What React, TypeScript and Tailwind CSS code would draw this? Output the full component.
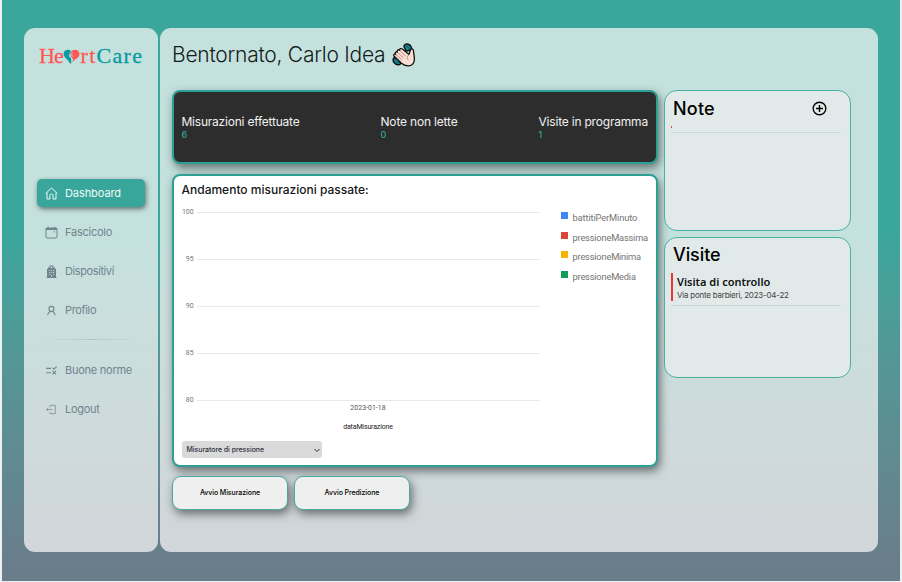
import type { ReactNode } from 'react';
import { MdRule } from 'react-icons/md';

const navIcon = 'h-[13px] w-[13px] shrink-0';

function HomeIcon() {
  return (
    <svg className={navIcon} viewBox="0 0 13 13" fill="none" stroke="currentColor" strokeWidth="1" strokeLinejoin="round">
      <path d="M.8 6.400 6.500 1 12.200 6.400M2 5.600V12h2.900V8.200c0-.7.5-1.100 1.600-1.100s1.600.4 1.600 1.100V12H11V5.600" />
    </svg>
  );
}

function CalendarIcon() {
  return (
    <svg className={navIcon} viewBox="0 0 13 13" fill="none" stroke="currentColor">
      <rect x="1" y="2" width="11" height="10" rx="1" />
      <path d="M1 3h11" strokeWidth="2" />
      <path d="M3.2.7v1.5M9.8.7v1.5" />
      <path d="M8.7 5.8h1.2" strokeWidth="1.2" />
    </svg>
  );
}

function BuildingIcon() {
  return (
    <svg className={navIcon} viewBox="0 0 13 13">
      <path fill="currentColor" d="M4.5 0.5h4v2H10v1.300h1V12h.5v1H1.500v-1H2V3.800h1V2.500h1.5z" />
      <path stroke="#c7e0dd" strokeWidth=".8" d="M6.5 1.300v2M5.500 2.300h2M4 5.500h1.2M6 5.500h1.2M8 5.500h1.2M4 7.500h1.2M6 7.500h1.2M8 7.500h1.2M4 9.500h1.2M8 9.500h1.2M6.5 10V12" />
    </svg>
  );
}

function PersonIcon() {
  return (
    <svg className={navIcon} viewBox="0 0 13 13" fill="none" stroke="currentColor" strokeWidth="1.1">
      <circle cx="6.400" cy="4.900" r="2.500" />
      <path d="M2.700 11.300C3 9 4.200 7.500 6.400 7.500s3.400 1.500 3.700 3.800" />
    </svg>
  );
}

function LogoutIcon() {
  return (
    <svg className={navIcon} viewBox="0 0 13 13" fill="none" stroke="currentColor" strokeWidth=".7">
      <path d="M5 4V2.300h5.300v8.400H5V9M1.500 6.500h6M3.300 4.900 1.600 6.500l1.700 1.600" />
    </svg>
  );
}

function ClapIcon() {
  return (
    <svg className="h-6 w-6" viewBox="0 0 24 24" stroke="#111" strokeLinejoin="round" strokeLinecap="round">
      <path fill="#168da1" strokeWidth="1.500" d="M12 3.500C12 1 15 .3 17 1.500c2 1.100 3.200 3.500 2 5.500L14 8zM2.500 14.500c-2 1-1.700 4 .2 5.800 1.600 1.600 4.300 2.200 6 .4L7 16z" />
      <path fill="none" stroke="#0b3c48" strokeWidth=".8" d="M14 3.300c1.700 0 3 1.500 3.500 3M3 16.300c.3 1.900 2 3.200 3.800 3.200" />
      <path fill="#fbded1" strokeWidth="1.300" d="M9.500 20.300 2.200 13.200c-1.300-1.500.2-2.800 1.500-1.900C2.500 9.700 4 8.200 5.300 9.300 4.500 7.400 6.300 6.100 7.600 7.300 7.500 5.700 9.200 5 10.400 6.100l6.600 5.300 1.300-4.200c.6-1.900 3.100-1.600 3.100.4l1 7.500c.4 4.500-1.900 7.600-5.600 7.800-3 .2-5.200-.7-7.300-2.600z" />
      <path fill="none" stroke="#a97e70" strokeWidth=".8" d="m4 11.500 5.500 5M5.800 9.700l5.500 5M8 7.800l5.500 5M17 11.700c-2.200 1.500-2.300 3.800-.8 5.300" />
    </svg>
  );
}

function Logo() {
  return (
    <div className="flex h-6 items-center font-['Liberation_Serif',serif] text-[22px] leading-6">
      <span className="w-[23.500px] tracking-[-0.8px] text-[#ff5757] [-webkit-text-stroke:0.3px_#ff5757]">He</span>
      <svg className="h-[15px] w-[17px] shrink-0" viewBox="0 0 17 15">
        <path fill="#099ba1" d="M8 2C5.500-.5.500 1 .500 5c0 3.500 4.500 5 6.500 9.500l2-.5L8 9 6 7l2-2z" />
        <path fill="#ff5757" d="M8 3C10-.8 16.500.3 16.500 5c0 4-5 5-7.500 8.500L10 10 7.500 7z" />
        <path fill="none" stroke="#c7e1dd" strokeWidth=".7" d="M7.500 2.500 6.300 7 9 9.300 8.500 14M9.500 3.500 8 6l2.500 1.500" />
      </svg>
      <span className="w-[17px] pl-px tracking-[1.400px] text-[#ff5757] [-webkit-text-stroke:0.3px_#ff5757]">rt</span>
      <span className="tracking-[1.300px] text-[#099ba1] [-webkit-text-stroke:0.3px_#099ba1]">Care</span>
    </div>
  );
}

function NavItem({ icon, label, active = false, tracking }: { icon: ReactNode; label: string; active?: boolean; tracking: string }) {
  return (
    <a
      className={
        'flex h-7 items-center rounded-[5px] pl-[7.500px] text-[11px] ' +
        (active ? 'bg-[#38a69a] text-[#effaf8] shadow-[1px_2px_5px_rgba(0,0,0,0.5)]' : 'text-[#71848e]')
      }
    >
      {icon}
      <span className={'ml-[7.500px] whitespace-nowrap ' + tracking}>{label}</span>
    </a>
  );
}

function Stat({ label, value, className }: { label: string; value: number; className: string }) {
  return (
    <div className={'shrink-0 whitespace-nowrap ' + className}>
      <div className="text-[12px] leading-[15px] text-[#f1f1f1]">{label}</div>
      <div className="text-[9px] leading-[11px] font-medium tracking-normal text-[#2ea497]">{value}</div>
    </div>
  );
}

const ticks = [100, 95, 90, 85, 80];

const series = [
  { name: 'battitiPerMinuto', color: 'bg-[#4285f4]', tracking: 'tracking-[-0.12px]' },
  { name: 'pressioneMassima', color: 'bg-[#db4437]', tracking: 'tracking-[-0.2px]' },
  { name: 'pressioneMinima', color: 'bg-[#f4b400]', tracking: 'tracking-[-0.2px]' },
  { name: 'pressioneMedia', color: 'bg-[#0f9d58]', tracking: 'tracking-[-0.2px]' },
];

function Chart() {
  return (
    <div className="mt-[8px] flex h-[232px] font-['Roboto',sans-serif]">
      <div className="w-[358px]">
        {ticks.map((t) => (
          <div key={t} className="flex h-[47px] items-start">
            <span className="w-[12px] text-right text-[7px] leading-[14px] tracking-[-0.1px] text-[#777]">{t}</span>
            <div className="mt-[7px] ml-[3px] h-px flex-1 bg-[#e9e9e9]" />
          </div>
        ))}
        <div className="-mt-[36px] pl-[15px] text-center text-[7px] leading-[9px] text-[#555]">
          <div>2023-01-18</div>
          <div className="mt-[10px] tracking-[-0.15px] text-[#222]">dataMisurazione</div>
        </div>
      </div>
      <div className="ml-[21px] pt-[2px]">
        {series.map((s) => (
          <div key={s.name} className="flex h-[19.700px] items-start">
            <div className={'mt-[5px] h-[7px] w-[7px] ' + s.color} />
            <span className={'ml-[5px] text-[9.300px] leading-[21px] text-[#757575] ' + s.tracking}>{s.name}</span>
          </div>
        ))}
      </div>
    </div>
  );
}

const cardShadow = 'shadow-[2px_4px_10px_rgba(0,0,0,0.5)]';

function SideCard({ children }: { children: ReactNode }) {
  return (
    <section className="h-[141px] w-[187px] rounded-[13px] border-[1.5px] border-[#4bb1a5] bg-[#e1eae8] pr-[9px] pl-[6px]">
      {children}
    </section>
  );
}

export default function App() {
  return (
    <div className="h-[582px] w-[902px] overflow-hidden bg-[#edf1f3] px-[2px] pb-[1px] font-['Inter',sans-serif]">
      <div className="flex h-[581px] w-[898px] gap-[2px] bg-linear-to-b from-[#3aa69c] from-40% to-[#6a7d8b] to-98% pt-7 pl-[22px]">
        <aside className="h-[524px] w-[134px] rounded-[11px] bg-[#faf8f8]/72 px-[13px] pt-4">
          <div className="pl-[2px]"><Logo /></div>
          <nav className="mt-[111px] w-[108px]">
            <NavItem active icon={<HomeIcon />} label="Dashboard" tracking="tracking-[-0.08px]" />
            <div className="mt-[11px]"><NavItem icon={<CalendarIcon />} label="Fascicolo" tracking="tracking-[-0.25px]" /></div>
            <div className="mt-[11px]"><NavItem icon={<BuildingIcon />} label="Dispositivi" tracking="tracking-[-0.4px]" /></div>
            <div className="mt-[11px]"><NavItem icon={<PersonIcon />} label="Profilo" tracking="tracking-[-0.35px]" /></div>
            <div className="mt-[15px] ml-[6px] h-px w-[96px] bg-linear-to-r from-transparent via-[#b2c6c6] to-transparent" />
            <div className="mt-4"><NavItem icon={<MdRule className={navIcon} />} label="Buone norme" tracking="tracking-[-0.25px]" /></div>
            <div className="mt-[11px]"><NavItem icon={<LogoutIcon />} label="Logout" tracking="tracking-[-0.3px]" /></div>
          </nav>
        </aside>
        <main className="h-[524px] w-[718px] rounded-[11px] bg-[#faf8f8]/72 pt-[13px] pl-[12px]">
          <header className="flex h-7 items-center">
            <h1 className="w-[220px] text-[21px] font-light tracking-[-0.24px] whitespace-nowrap text-[#121c1b]">Bentornato, Carlo Idea</h1>
            <ClapIcon />
          </header>
          <div className="mt-[21px] flex gap-[6px]">
            <div className="w-[486px]">
              <section className={'flex h-[74px] rounded-[8px] border-2 border-[#2ca094] bg-[#2d2d2d] pt-[22px] pl-[7.500px] ' + cardShadow}>
                <Stat label="Misurazioni effettuate" value={6} className="w-[199px] tracking-[-0.22px]" />
                <Stat label="Note non lette" value={0} className="w-[158px] tracking-[-0.18px]" />
                <Stat label="Visite in programma" value={1} className="tracking-[-0.2px]" />
              </section>
              <section className={'mt-[10px] h-[293px] rounded-[8px] border-2 border-[#2ca094] bg-white pt-[5px] pl-[7.500px] ' + cardShadow}>
                <h2 className="text-[12px] leading-[17px] font-medium tracking-[0px] text-[#161616]">Andamento misurazioni passate:</h2>
                <div className="-mt-px"><Chart /></div>
                <div className="mt-[4px] flex h-[17px] w-[140px] items-center justify-between rounded-[3px] bg-[#dadada] pt-px pr-[2px] pl-[5px] text-[7px] font-medium tracking-[-0.05px] text-[#30303c]">
                  <span>Misuratore di pressione</span>
                  <svg className="h-[5px] w-[6px]" viewBox="0 0 6 5" fill="none" stroke="#333"><path d="m.5 1 2.500 2.500L5.500 1" /></svg>
                </div>
              </section>
              <div className="mt-[9px] flex gap-[6px]">
                <button className={'h-[34px] w-[116px] rounded-[9px] border-[1.5px] border-[#4aaba0] bg-[#efefef] text-[7px] font-medium tracking-[-0.07px] ' + cardShadow}>Avvio Misurazione</button>
                <button className={'h-[34px] w-[116px] rounded-[9px] border-[1.5px] border-[#4aaba0] bg-[#efefef] text-[7px] font-medium tracking-[-0.07px] ' + cardShadow}>Avvio Predizione</button>
              </div>
            </div>
            <div className="flex flex-col gap-[6px]">
              <SideCard>
                <div className="flex h-[34px] items-center justify-between pr-[14px] pl-[2px]">
                  <h2 className="text-[18px] font-medium tracking-[0.2px]">Note</h2>
                  <svg className="h-[15px] w-[15px]" viewBox="0 0 15 15" fill="none" stroke="#000" strokeWidth="1.400">
                    <circle cx="7.500" cy="7.500" r="6.300" /><path d="M7.500 4v7M4 7.500h7" />
                  </svg>
                </div>
                <div className="h-[8px] border-b border-[#cbd6d5] pt-px"><div className="h-[2px] w-px bg-[#e54848]" /></div>
              </SideCard>
              <SideCard>
                <h2 className="h-[35px] pl-[2px] text-[18px] leading-[34px] font-medium tracking-[-0.1px]">Visite</h2>
                <div className="flex h-[33px] border-b border-[#cbd6d5]">
                  <div className="h-7 w-[1.500px] shrink-0 bg-[#ee3535]" />
                  <div className="pl-[4.500px] whitespace-nowrap">
                    <div className="font-['Noto_Sans',sans-serif] text-[11px] leading-[17px] font-semibold text-[#111]">Visita di controllo</div>
                    <div className="text-[8px] leading-[11px] tracking-[-0.23px] text-[#444]">Via ponte barbieri, 2023-04-22</div>
                  </div>
                </div>
              </SideCard>
            </div>
          </div>
        </main>
      </div>
    </div>
  );
}
